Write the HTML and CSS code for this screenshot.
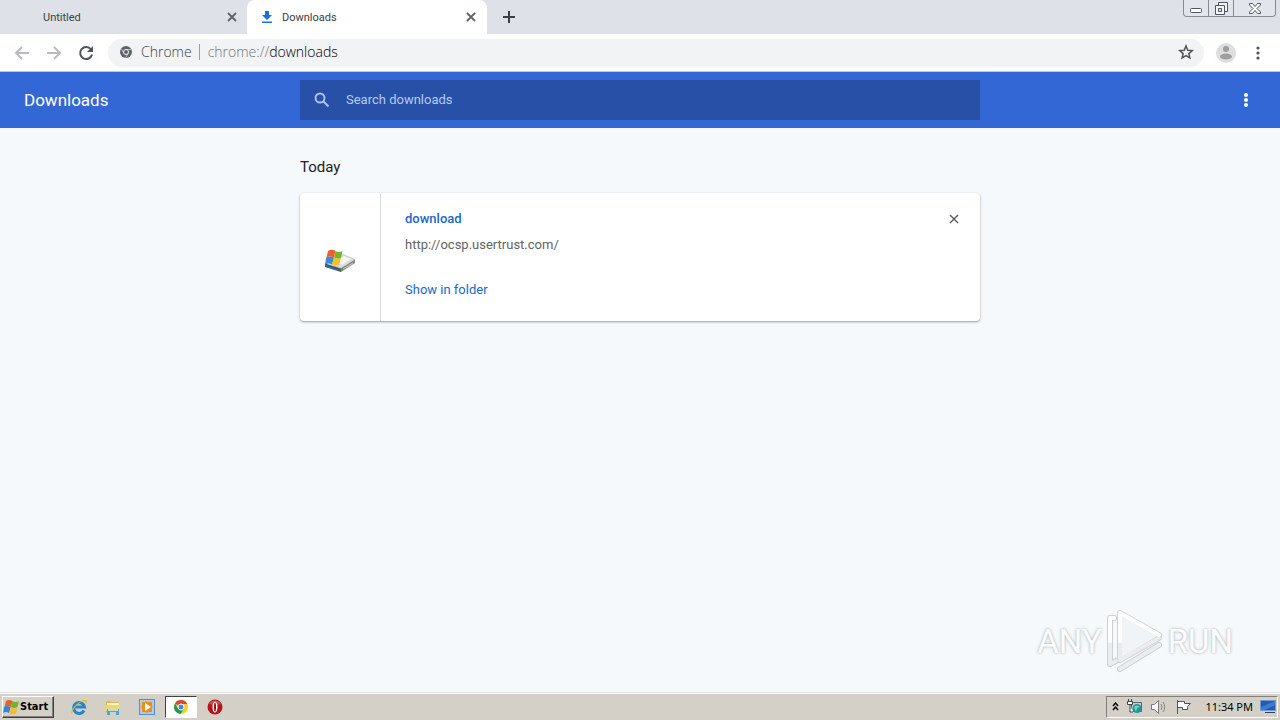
FILE: index.html
```html
<!DOCTYPE html>
<html lang="en">
<head>
  <meta charset="UTF-8">
  <meta name="viewport" content="width=device-width, initial-scale=1.0">
  <title>Downloads</title>
  <link rel="stylesheet" href="styles.css">
</head>
<body>
  <div class="tab-strip">
    <div class="tab">
      <span class="tab-title">Untitled</span>
      <button class="icon-btn" aria-label="Close tab"><svg width="10" height="10" viewBox="0 0 10 10"><path d="M1 1l8 8M9 1L1 9" stroke="#5f6368" stroke-width="1.800"/></svg></button>
    </div>
    <div class="tab active">
      <svg class="tab-icon" width="12" height="14" viewBox="0 0 12 14"><path d="M4 1h4v4h3L6 10 1 5h3zM1 11.500h10V13H1z" fill="#1a6fdd"/></svg>
      <span class="tab-title">Downloads</span>
      <button class="icon-btn" aria-label="Close tab"><svg width="10" height="10" viewBox="0 0 10 10"><path d="M1 1l8 8M9 1L1 9" stroke="#5f6368" stroke-width="1.800"/></svg></button>
    </div>
    <button class="icon-btn new-tab" aria-label="New tab"><svg width="12" height="12" viewBox="0 0 12 12"><path d="M6 0v12M0 6h12" stroke="#3c4043" stroke-width="2"/></svg></button>
    <div class="window-controls">
      <button aria-label="Minimize"><svg width="12" height="5" viewBox="0 0 12 5"><rect x=".5" y=".5" width="11" height="4" rx="1" fill="#fff" stroke="#50555e"/></svg></button>
      <button aria-label="Restore"><svg width="13" height="13" viewBox="0 0 13 13"><path d="M3.500.5h9v9h-9z" fill="#f4f5f7" stroke="#50555e"/><path d="M.5 3.500h9v9h-9z" fill="#f4f5f7" stroke="#50555e"/><path d="M3.500 6.500h3v3h-3z" fill="#dee1e8" stroke="#50555e"/></svg></button>
      <button class="close" aria-label="Close"><svg width="12" height="11" viewBox="0 0 12 11"><path d="M.5.5h3L6 3.500 8.500.5h3v1.500L8 5.500l3.500 3.500v1.500h-3L6 7.500 3.500 10.500h-3V9L4 5.500.5 2z" fill="#fff" stroke="#50555e"/></svg></button>
    </div>
  </div>

  <div class="toolbar">
    <button class="icon-btn" aria-label="Back"><svg width="16" height="16" viewBox="0 0 16 16"><path d="M15 8H2M8 2L2 8l6 6" fill="none" stroke="#b9bbbe" stroke-width="2"/></svg></button>
    <button class="icon-btn" aria-label="Forward"><svg width="16" height="16" viewBox="0 0 16 16"><path d="M1 8h13M8 2l6 6-6 6" fill="none" stroke="#b9bbbe" stroke-width="2"/></svg></button>
    <button class="icon-btn" aria-label="Reload"><svg width="16" height="16" viewBox="0 0 16 16"><path d="M13 4.500A6 6 0 1 0 14 9.500" fill="none" stroke="#505357" stroke-width="2"/><path d="M15 1v6H9z" fill="#505357"/></svg></button>
    <div class="omnibox">
      <svg width="12" height="12" viewBox="0 0 12 12"><circle cx="6" cy="6" r="6" fill="#5f6368"/><circle cx="6" cy="6" r="2.500" fill="#5f6368" stroke="#f1f3f4"/><path d="M6 3.500h5.200M3.800 7.200L1.300 2.800M8.200 7.200l-2.600 4.500" stroke="#f1f3f4" stroke-width=".6"/></svg>
      <span class="scheme">Chrome</span>
      <span class="divider"></span>
      <span class="url">chrome://<b>downloads</b></span>
      <button class="icon-btn" aria-label="Bookmark this page"><svg width="16" height="16" viewBox="0 0 16 16"><path d="M8 2l1.800 4.200 4.500.4-3.400 3 1 4.400L8 11.700 4.100 14l1-4.400-3.400-3 4.500-.4z" fill="none" stroke="#505357" stroke-width="1.500"/></svg></button>
    </div>
    <button class="icon-btn" aria-label="Profile"><svg width="20" height="20" viewBox="0 0 20 20"><circle cx="10" cy="10" r="10" fill="#dedede"/><circle cx="10" cy="6" r="3" fill="#9e9e9e"/><ellipse cx="10" cy="13.500" rx="6" ry="3" fill="#9e9e9e"/></svg></button>
    <button class="icon-btn menu" aria-label="Menu"><svg width="4" height="14" viewBox="0 0 4 14" fill="#505357"><circle cx="2" cy="2" r="1.600"/><circle cx="2" cy="7" r="1.600"/><circle cx="2" cy="12" r="1.600"/></svg></button>
  </div>

  <header class="app-header">
    <h1>Downloads</h1>
    <label class="search">
      <svg width="16" height="16" viewBox="0 0 16 16"><circle cx="6" cy="6" r="4.500" fill="none" stroke="#a9c3f3" stroke-width="2"/><path d="M9.500 9.500l5 5" stroke="#a9c3f3" stroke-width="2"/></svg>
      <input type="search" placeholder="Search downloads" aria-label="Search downloads">
    </label>
    <button class="icon-btn" aria-label="More actions"><svg width="4" height="14" viewBox="0 0 4 14" fill="#fff"><circle cx="2" cy="2" r="2"/><circle cx="2" cy="7" r="2"/><circle cx="2" cy="12" r="2"/></svg></button>
  </header>

  <main class="content">
    <div class="list">
      <h2>Today</h2>
      <div class="card">
        <div class="file-icon">
          <svg width="32" height="24" viewBox="0 0 32 24">
            <path d="M1 15L18 5l13 5.500-14 9z" fill="#dcdcdc" stroke="#aaa" stroke-width=".5"/>
            <path d="M12 13l8-6 7 3-9 6z" fill="#f5f5f5"/>
            <path d="M17 19.500l14-9v3.500l-14 9z" fill="#858585"/>
            <path d="M1 14.500l16 5V23L1 18z" fill="#4b5558"/>
            <path d="M2 16l12 4v1.500L2 18z" fill="#2a6fb5"/>
            <path d="M14 20l4 1 3-2v-2l-4 2.500z" fill="#43a051"/>
            <path d="M19 20l10-6" stroke="#ccc" stroke-width="1"/>
            <path d="M4 2q4-2.500 7.500 0L10 8.500Q6 6.500 2.500 8.500z" fill="#e8602c"/>
            <path d="M11.500 2q3 2 7 0L17 9q-3 1.500-7-.5z" fill="#77b62f"/>
            <path d="M2.200 8.500q4-2 7.800 0L8 15.500q-3-2-7 0z" fill="#3b8edb"/>
            <path d="M10 8.500q3 2 7 .5l-2 7q-3 1-7-.5z" fill="#f3c32b"/>
          </svg>
        </div>
        <div class="details">
          <a class="file-name" href="#">download</a>
          <a class="source" href="#">http://ocsp.usertrust.com/</a>
          <a class="action" href="#">Show in folder</a>
        </div>
        <button class="icon-btn remove" aria-label="Remove from list"><svg width="10" height="10" viewBox="0 0 10 10"><path d="M1 1l8 8M9 1L1 9" stroke="#5a5a5a" stroke-width="1.400"/></svg></button>
      </div>
    </div>
  </main>

  <div class="watermark">
    <span>ANY</span>
    <svg width="58" height="64" viewBox="0 0 58 64" fill="none" stroke-linejoin="round" stroke-linecap="round">
      <path d="M8 9H4v46l6-3M14 48V4l39 22M14 51l39-22M14 60l39-24" stroke="#cfd2d4" stroke-width="6"/>
      <path d="M14 48V4l39 22L14 49z" fill="#f1f4f6"/>
      <path d="M8 9H4v46l6-3M14 51V4l39 22M14 51l39-22M14 60l39-24" stroke="#eaecee" stroke-width="4"/>
      <path d="M8 9H4v23M14 32V4l39 22" stroke="#fff" stroke-width="4"/>
    </svg>
    <span>RUN</span>
  </div>

  <footer class="taskbar">
    <button class="start">
      <svg width="17" height="16" viewBox="0 0 17 16"><path d="M3 2q3-2 6.500 0L8 8Q5 6 1.500 8z" fill="#e8602c"/><path d="M9.500 2q3 2 6.500 0l-1.500 6q-3 2-6.500 0z" fill="#6eb52f"/><path d="M1.200 8q3-2 6.500 0L6 14q-3-2-6 0z" fill="#3485d8"/><path d="M8 8.500q3 2 6.500 0L13 14.500q-3 2-6.500 0z" fill="#f5bd25"/></svg>
      Start
    </button>
    <div class="launchers">
      <button aria-label="Internet Explorer"><svg width="18" height="18" viewBox="0 0 18 18"><path d="M14 12.500A5.500 5.500 0 1 1 14.500 9H5" fill="none" stroke="#2387cf" stroke-width="3"/><path d="M2 16C-1 13 9 1 16 2c2 1 0 4-1 5 1-2 1-3 0-3.500C11 2 2 11 2 16z" fill="#e9b72c"/></svg></button>
      <button aria-label="Windows Explorer"><svg width="18" height="18" viewBox="0 0 18 18"><path d="M2 4l1-1h4l1 1h7v10H2z" fill="#dcb94c"/><path d="M3 5h12v2H3z" fill="#fff4bf"/><path d="M2 7h14v6H2z" fill="#f0d573"/><path d="M3 17v-6h12v6h-3v-3H6v3z" fill="#4fa6d3"/><path d="M4 11h10v2H4z" fill="#b1e1f4"/></svg></button>
      <button aria-label="Media Player"><svg width="18" height="18" viewBox="0 0 18 18"><rect x="1.500" y="1.500" width="15" height="15" fill="#a9cdea" stroke="#5591c8"/><rect x="4" y="4" width="10" height="10" fill="#f28c16"/><circle cx="9" cy="9" r="5.500" fill="#f28c16"/><path d="M7 5l6 4-6 4z" fill="#fff"/></svg></button>
      <button class="pressed" aria-label="Chrome"><svg width="14" height="14" viewBox="0 0 14 14"><circle cx="7" cy="7" r="7" fill="#f9cd2a"/><path d="M7 7L1 3.400A7 7 0 0 1 13.200 4H7z" fill="#db4437"/><path d="M1 3.400A7 7 0 0 0 6.500 14L10 8.500 7 7 4 8.500z" fill="#219955"/><circle cx="7" cy="7" r="3" fill="#4285f4" stroke="#fff"/></svg></button>
      <button aria-label="Opera"><svg width="16" height="16" viewBox="0 0 16 16"><circle cx="8" cy="8" r="7.500" fill="#b5141c"/><path d="M2 5a7 7 0 0 1 12 0Q8 7 2 5z" fill="#d6484e"/><ellipse cx="8" cy="8" rx="2.500" ry="5.500" fill="#fff"/><ellipse cx="8" cy="8" rx="1" ry="4.500" fill="#8f1017"/></svg></button>
    </div>
    <div class="tray">
      <svg width="7" height="9" viewBox="0 0 7 9"><path d="M1 4l2.500-3L6 4M1 8l2.500-3L6 8" fill="none" stroke="#000" stroke-width="1.400"/></svg>
      <svg width="17" height="17" viewBox="0 0 17 17"><path d="M5.500 4.500h10v9h-10z" fill="#bfd0d5" stroke="#55686d"/><path d="M2.500 1v3M5.500 1v3M1.500 3.500h5v3h-5zM4 7v7h3" fill="#fff" stroke="#444"/><circle cx="11" cy="10.500" r="4.500" fill="#23959b"/><path d="M8 9q3-3 6 0l-3 1-1 4z" fill="#7fd1b4"/></svg>
      <svg width="18" height="16" viewBox="0 0 18 16"><path d="M1.500 5.500h3l4-4v13l-4-4h-3z" fill="#fff" stroke="#777"/><path d="M11 5q2 3 0 6M13 3q3.500 5 0 10" fill="none" stroke="#858585"/></svg>
      <svg width="17" height="16" viewBox="0 0 17 16"><path d="M2.500 1v14M2.500 2.500h7v2h6l-3 3v3h-5v-2h-5" fill="#fff" stroke="#555"/></svg>
      <time>11:34 PM</time>
      <svg width="16" height="14" viewBox="0 0 16 14"><path d="M.5.500h15v10H.5z" fill="#235bb0" stroke="#719bd2"/><path d="M1 7L15 1v4L5 10H1z" fill="#3d7bd0"/><path d="M5 12h10v1H5z" fill="#28415f"/></svg>
    </div>
  </footer>
</body>
</html>
```
FILE: styles.css
```css
* {
  box-sizing: border-box;
}
body {
  margin: 0;
  min-height: 100vh;
  display: flex;
  flex-direction: column;
  background: #f5f9fc;
  font-family: Roboto, sans-serif;
  font-size: 13px;
}
svg {
  display: block;
  flex: none;
}
button {
  font: inherit;
  padding: 0;
}
a {
  text-decoration: none;
}
.icon-btn {
  display: flex;
  align-items: center;
  justify-content: center;
  border: 0;
  background: none;
  flex: none;
}

/* browser frame */
.tab-strip {
  display: flex;
  height: 34px;
  background: #dee1e8;
}
.tab {
  display: flex;
  align-items: center;
  width: 247px;
  padding: 0 10px 0 43px;
  font-size: 11px;
  color: #3c4043;
}
.tab.active {
  width: 240px;
  padding: 0 11px 0 14px;
  background: #fff;
  border-radius: 8px 8px 0 0;
}
.tab-icon {
  margin-right: 9px;
}
.tab-title {
  flex: 1;
}
.new-tab {
  width: 44px;
}
.window-controls {
  display: flex;
  height: 17px;
  margin: 0 4px 0 auto;
  border: 1px solid #858a93;
  border-top: 0;
  border-radius: 0 0 4px 4px;
}
.window-controls button {
  display: flex;
  align-items: center;
  justify-content: center;
  width: 25px;
  border: 0;
  border-right: 1px solid #858a93;
  background: #e2e5eb;
}
.window-controls button:first-child {
  padding-top: 4px;
  border-radius: 0 0 0 4px;
}
.window-controls .close {
  width: 41px;
  border-right: 0;
  border-radius: 0 0 4px 0;
}
.toolbar {
  display: flex;
  align-items: center;
  height: 38px;
  padding: 0 20px 0 14px;
  gap: 16px;
  background: #fff;
  border-bottom: 1px solid #b9c6df;
}
.omnibox {
  flex: 1;
  display: flex;
  align-items: center;
  height: 28px;
  margin: 0 -4px 0 -2px;
  padding: 0 10px 2px 12px;
  border-radius: 14px;
  background: #f1f3f4;
  font-family: "Open Sans", sans-serif;
  font-size: 14px;
  font-weight: 300;
  color: #3c4043;
}
.scheme {
  margin-left: 9px;
}
.divider {
  width: 1px;
  height: 16px;
  margin: 0 8px 0 7px;
  background: #9aa0a6;
}
.url {
  flex: 1;
  color: #70757a;
}
.url b {
  font-weight: inherit;
  color: #000;
}
.menu {
  margin-left: 4px;
}

/* downloads page */
.app-header {
  display: grid;
  grid-template-columns: 1fr 680px 1fr;
  align-items: center;
  height: 56px;
  padding: 0 32px 0 24px;
  background: #3367d6;
  color: #fff;
}
.app-header h1 {
  margin: 0;
  font-size: 17px;
  font-weight: 400;
}
.app-header .icon-btn {
  justify-self: end;
}
.search {
  display: flex;
  align-items: center;
  gap: 16px;
  height: 40px;
  margin: 0 -4px 0 4px;
  padding: 0 14px;
  background: #2850a7;
}
.search input {
  flex: 1;
  padding: 0 0 2px;
  border: 0;
  outline: 0;
  background: none;
  color: #fff;
  font: inherit;
}
.search input::placeholder {
  color: #b5cbf5;
}
.content {
  flex: 1;
}
.list {
  width: 680px;
  margin: 0 auto;
}
.list h2 {
  margin: 0;
  padding: 29px 0 16px;
  font-size: 15px;
  line-height: 20px;
  font-weight: 400;
  color: #202124;
}
.card {
  display: flex;
  height: 128px;
  background: #fff;
  border-radius: 4px;
  box-shadow: 0 1px 2px rgba(60, 64, 67, .4), 0 1px 3px rgba(60, 64, 67, .15);
}
.file-icon {
  display: flex;
  align-items: center;
  justify-content: center;
  width: 81px;
  padding-top: 8px;
  border-right: 1px solid #d8dadc;
}
.details {
  flex: 1;
  display: flex;
  flex-direction: column;
  align-items: flex-start;
  padding: 16px 24px;
  line-height: 20px;
}
.file-name {
  font-weight: 500;
  color: #1967d2;
}
.source {
  margin-top: 6px;
  color: #5f6368;
}
.action {
  margin-top: 25px;
  color: #1967d2;
}
.remove {
  width: 20px;
  height: 20px;
  margin: 16px 16px 0 0;
}

.watermark {
  position: absolute;
  right: 47px;
  bottom: 47px;
  display: flex;
  align-items: center;
  gap: 4px;
  font-size: 33px;
  color: #fbfcfc;
  text-shadow: 0 0 3px #a3a6a8;
}

/* taskbar */
.taskbar {
  display: flex;
  align-items: center;
  height: 28px;
  padding: 2px;
  background: #d4d0c8;
  border-top: 1px solid #e6e3dd;
  box-shadow: inset 0 1px #fff;
}
.start {
  display: flex;
  align-items: center;
  height: 22px;
  width: 52px;
  border: 1px solid;
  border-color: #fff #404040 #404040 #fff;
  box-shadow: inset -1px -1px #808080;
  background: #d4d0c8;
  font-family: "DejaVu Sans Condensed", "DejaVu Sans", sans-serif;
  font-size: 11px;
  font-weight: 700;
}
.launchers {
  display: flex;
  margin-left: 9px;
  gap: 2px;
}
.launchers button {
  display: flex;
  align-items: center;
  justify-content: center;
  width: 32px;
  height: 22px;
  border: 0;
  background: none;
}
.launchers .pressed {
  border: 1px solid;
  border-color: #404040 #fff #fff #404040;
  background: #fff;
}
.tray {
  display: flex;
  align-items: center;
  height: 22px;
  margin-left: auto;
  padding: 0 1px 0 5px;
  gap: 7px;
  border: 1px solid;
  border-color: #808080 #fff #fff #808080;
  font-family: "Noto Sans", sans-serif;
  font-size: 11px;
}
.tray time {
  margin-left: 6px;
}
```
